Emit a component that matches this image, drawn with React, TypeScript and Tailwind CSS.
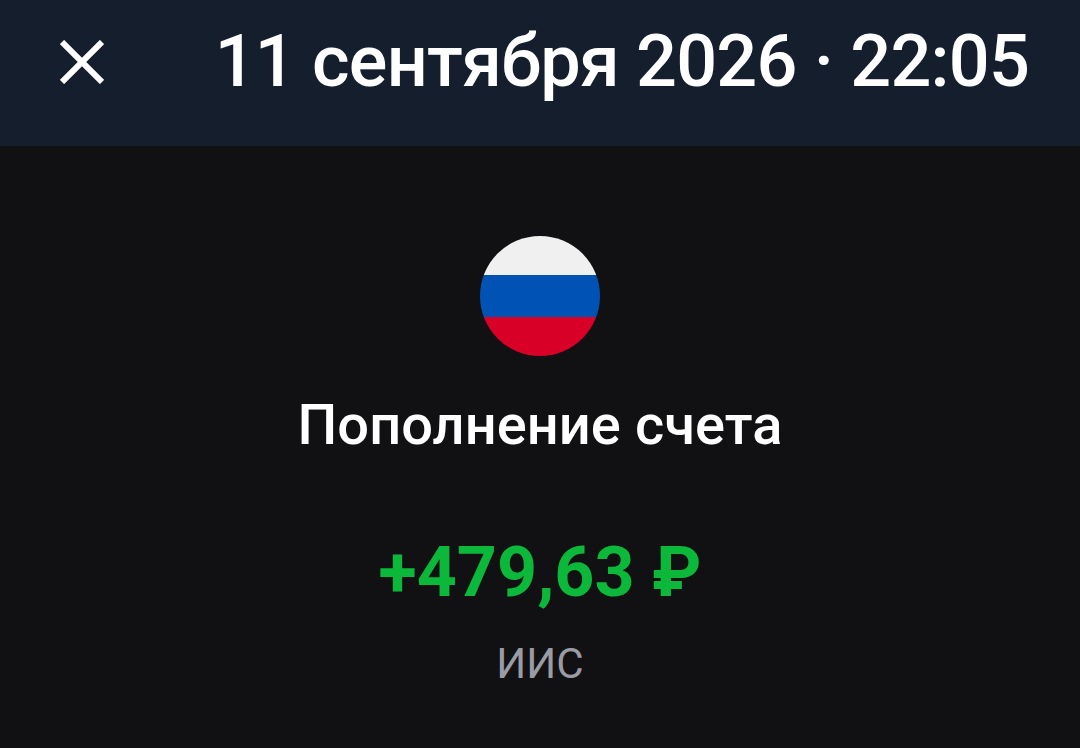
export default function App() {
  return (
    <div className="w-[1080px] h-[748px] bg-[#111113] flex flex-col overflow-hidden">
      <div className="h-[146px] bg-[#151e2c] flex items-center justify-between pl-[60px] pr-[51px] pb-[22px] shrink-0">
        <svg width="44" height="44" viewBox="0 0 44 44" className="shrink-0">
          <path d="M2 2 L42 42 M42 2 L2 42" stroke="#fff" strokeWidth="6" fill="none" />
        </svg>
        <div className="font-['Roboto',sans-serif] text-[72px] leading-none tracking-[-0.8px] text-white font-medium whitespace-nowrap">11 сентября 2026 · 22:05</div>
      </div>
      <div className="flex-1 flex flex-col items-center pt-[90px] font-['Roboto',sans-serif]">
        <div className="w-[120px] h-[120px] rounded-full overflow-hidden flex flex-col">
          <div className="h-[39px] bg-[#f0f0f0]" />
          <div className="h-[42px] bg-[#0052b4]" />
          <div className="h-[39px] bg-[#d80027]" />
        </div>
        <div className="mt-[39px] text-[56px] leading-[60px] tracking-[0.06px] text-white font-medium">Пополнение счета</div>
        <div className="mt-[81px] text-[70px] leading-[72px] text-[#0cb83a] font-bold">+479,63 ₽</div>
        <div className="mt-[30px] text-[42px] leading-[52px] text-[#9a9ba5]">ИИС</div>
      </div>
    </div>
  );
}
